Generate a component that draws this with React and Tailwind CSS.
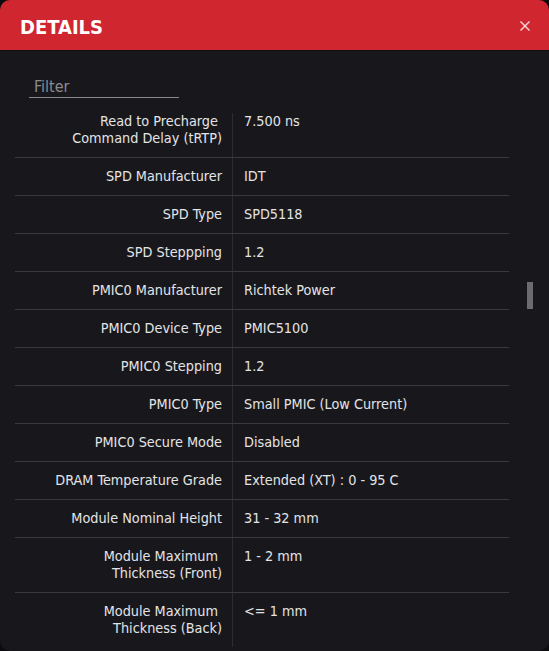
import React from "react";

const rows = [
  [["Read to Precharge\u00a0", "Command Delay (tRTP)"], "7.500 ns"],
  [["SPD Manufacturer"], "IDT"],
  [["SPD Type"], "SPD5118"],
  [["SPD Steppping"], "1.2"],
  [["PMIC0 Manufacturer"], "Richtek Power"],
  [["PMIC0 Device Type"], "PMIC5100"],
  [["PMIC0 Stepping"], "1.2"],
  [["PMIC0 Type"], "Small PMIC (Low Current)"],
  [["PMIC0 Secure Mode"], "Disabled"],
  [["DRAM Temperature Grade"], "Extended (XT) : 0 - 95 C"],
  [["Module Nominal Height"], "31 - 32 mm"],
  [["Module Maximum\u00a0", "Thickness (Front)"], "1 - 2 mm"],
  [["Module Maximum\u00a0", "Thickness (Back)"], "<= 1 mm"],
];

const font = {
  fontFamily: "'Liberation Sans Narrow', 'DejaVu Sans Condensed', Roboto, sans-serif",
};

export default function App() {
  return (
    <div className="w-[549px] h-[651px] bg-[#0c0c0e]" style={font}>
      <div className="flex h-full flex-col overflow-hidden rounded-[10px] bg-[#18181c]">
        <div className="flex h-[51px] shrink-0 items-center justify-between border-b border-[#0e0e10] bg-[#d0262f] pl-[20px] pr-[17px]">
          <span className="mt-[3px] text-[20px] font-bold leading-none text-white">DETAILS</span>
          <svg width="14" height="14" viewBox="0 0 14 14" className="mt-[2px]">
            <path d="M2.5 2.5 L11.5 11.5 M11.5 2.5 L2.5 11.5" stroke="#f6dede" strokeWidth="1.4" />
          </svg>
        </div>
        <div className="pl-[29px] pt-[26px]">
          <div className="w-[150px] border-b border-[#8a8a8e] pl-[5px] text-[16px] leading-[20px] text-[#8b8b8f]">
            Filter
          </div>
        </div>
        <div className="relative mt-[15px] flex-1 overflow-hidden">
          <div className="-mt-[10px] ml-[15px] w-[494px]">
            {rows.map(([label, value], i) => (
              <div
                key={i}
                className={`flex text-[14.3px] leading-[17px] text-[#e4e4e6] ${
                  i < rows.length - 1 ? "border-b border-[#3a3a3e]" : ""
                }`}
              >
                <div className="w-[218px] shrink-0 border-r border-[#2c2c30] py-[10px] pr-[10px] text-right">
                  {label.map((l, j) => (
                    <div key={j} className="whitespace-pre">{l}</div>
                  ))}
                </div>
                <div className="py-[10px] pl-[11px]">{value}</div>
              </div>
            ))}
          </div>
          <div className="absolute left-[527px] top-[169px] h-[27px] w-[6px] bg-[#6c6c6e]" />
        </div>
      </div>
    </div>
  );
}
